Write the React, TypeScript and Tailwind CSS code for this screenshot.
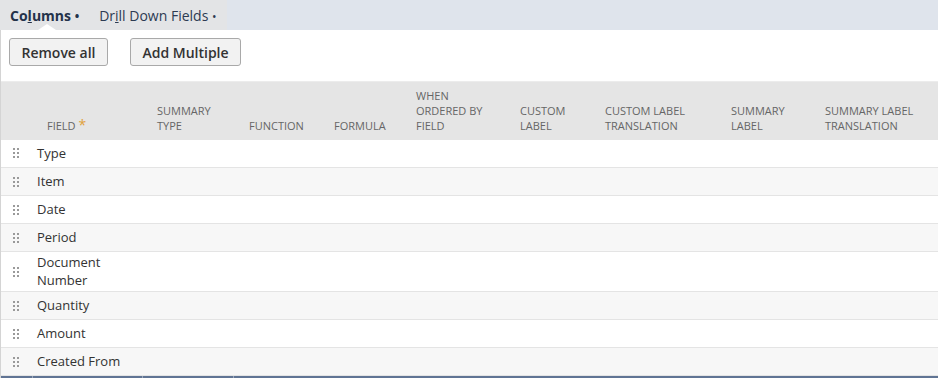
import React from "react"

const headers: { lines: string[] }[] = [
  { lines: ["SUMMARY", "TYPE"] },
  { lines: ["FUNCTION"] },
  { lines: ["FORMULA"] },
  { lines: ["WHEN", "ORDERED BY", "FIELD"] },
  { lines: ["CUSTOM", "LABEL"] },
  { lines: ["CUSTOM LABEL", "TRANSLATION"] },
  { lines: ["SUMMARY", "LABEL"] },
  { lines: ["SUMMARY LABEL", "TRANSLATION"] },
]

const widths = [26, 120, 92, 85, 82, 104, 85, 126, 94, 123]

const fields = ["Type", "Item", "Date", "Period", "Document Number", "Quantity", "Amount", "Created From"]

function DragHandle() {
  return (
    <svg width="6" height="10" viewBox="0 0 6 10" className="block">
      {[0, 4, 8].map((y) => (
        <g key={y} fill="#9a9a9a">
          <rect x="0" y={y} width="2" height="2" />
          <rect x="4" y={y} width="2" height="2" />
        </g>
      ))}
    </svg>
  )
}

export default function App() {
  return (
    <div className="w-[938px] h-[378px] overflow-hidden bg-white font-['Open_Sans',sans-serif] flex flex-col">
      {/* Tabs */}
      <div className="h-[30px] bg-[#dfe4ec] flex shrink-0">
        <div className="bg-[#e3e4e6] flex items-center pt-[2px] pl-[10px] pr-[11px] gap-[20px] relative">
          <span className="text-[14px] font-bold text-[#24324a]">
            Co<span className="underline">l</span>umns <span className="text-[12px] align-middle">•</span>
          </span>
          <span className="text-[14px] text-[#2c3a52]">
            Dr<span className="underline">i</span>ll Down Fields <span className="text-[12px] align-middle">•</span>
          </span>
          <div className="absolute left-[38px] bottom-0 w-0 h-0 border-l-[9px] border-r-[9px] border-b-[6px] border-l-transparent border-r-transparent border-b-white" />
        </div>
      </div>

      <div className="flex-1 border-l border-[#d4d4d4] flex flex-col min-h-0">
        {/* Buttons */}
        <div className="flex gap-[22px] pl-[8px] pt-[8px] pb-[15px]">
          <button className="h-[28px] w-[99px] bg-[#f2f2f2] border border-[#a9a9a9] rounded-[3px] text-[14px] font-semibold text-[#333]">
            Remove all
          </button>
          <button className="h-[28px] w-[111px] bg-[#f2f2f2] border border-[#a9a9a9] rounded-[3px] text-[14px] font-semibold text-[#333]">
            Add Multiple
          </button>
        </div>

        {/* Table */}
        <table className="table-fixed border-collapse w-[937px]">
          <colgroup>
            {widths.map((w, i) => (
              <col key={i} style={{ width: w }} />
            ))}
          </colgroup>
          <thead>
            <tr className="bg-[#e5e5e5] h-[58px] border-t border-[#ececec]">
              <th />
              <th className="align-bottom text-left pl-[20px] pb-[7px] text-[11px] font-normal text-[#666] leading-[15px]">
                FIELD <span className="text-[#e0a13a] text-[14px] leading-[10px]">*</span>
              </th>
              {headers.map((h, i) => (
                <th
                  key={i}
                  className="align-bottom text-left pl-[10px] pb-[7px] text-[11px] font-normal text-[#666] leading-[15px] whitespace-nowrap"
                >
                  {h.lines.map((l, j) => (
                    <div key={j}>{l}</div>
                  ))}
                </th>
              ))}
            </tr>
          </thead>
          <tbody>
            {fields.map((f, i) => (
              <tr key={f} className={`${i % 2 === 1 ? "bg-[#f7f7f7]" : "bg-white"} border-b border-[#e4e4e4]`}>
                <td className="pl-[12px] align-middle">
                  <DragHandle />
                </td>
                <td className="pl-[10px] pr-[10px] pt-[1px] pb-[2px] h-[28px] text-[13px] leading-[18px] text-[#333]">{f}</td>
                {headers.map((_, j) => (
                  <td key={j} />
                ))}
              </tr>
            ))}
          </tbody>
        </table>
        <div className="flex h-[2px] bg-[#607494] mt-auto shrink-0">
          <div className="w-[32px] border-r border-[#9aa7bb]" />
          <div className="w-[110px] border-r border-[#9aa7bb]" />
          <div className="w-[91px] border-r border-[#9aa7bb]" />
        </div>
      </div>
    </div>
  )
}
